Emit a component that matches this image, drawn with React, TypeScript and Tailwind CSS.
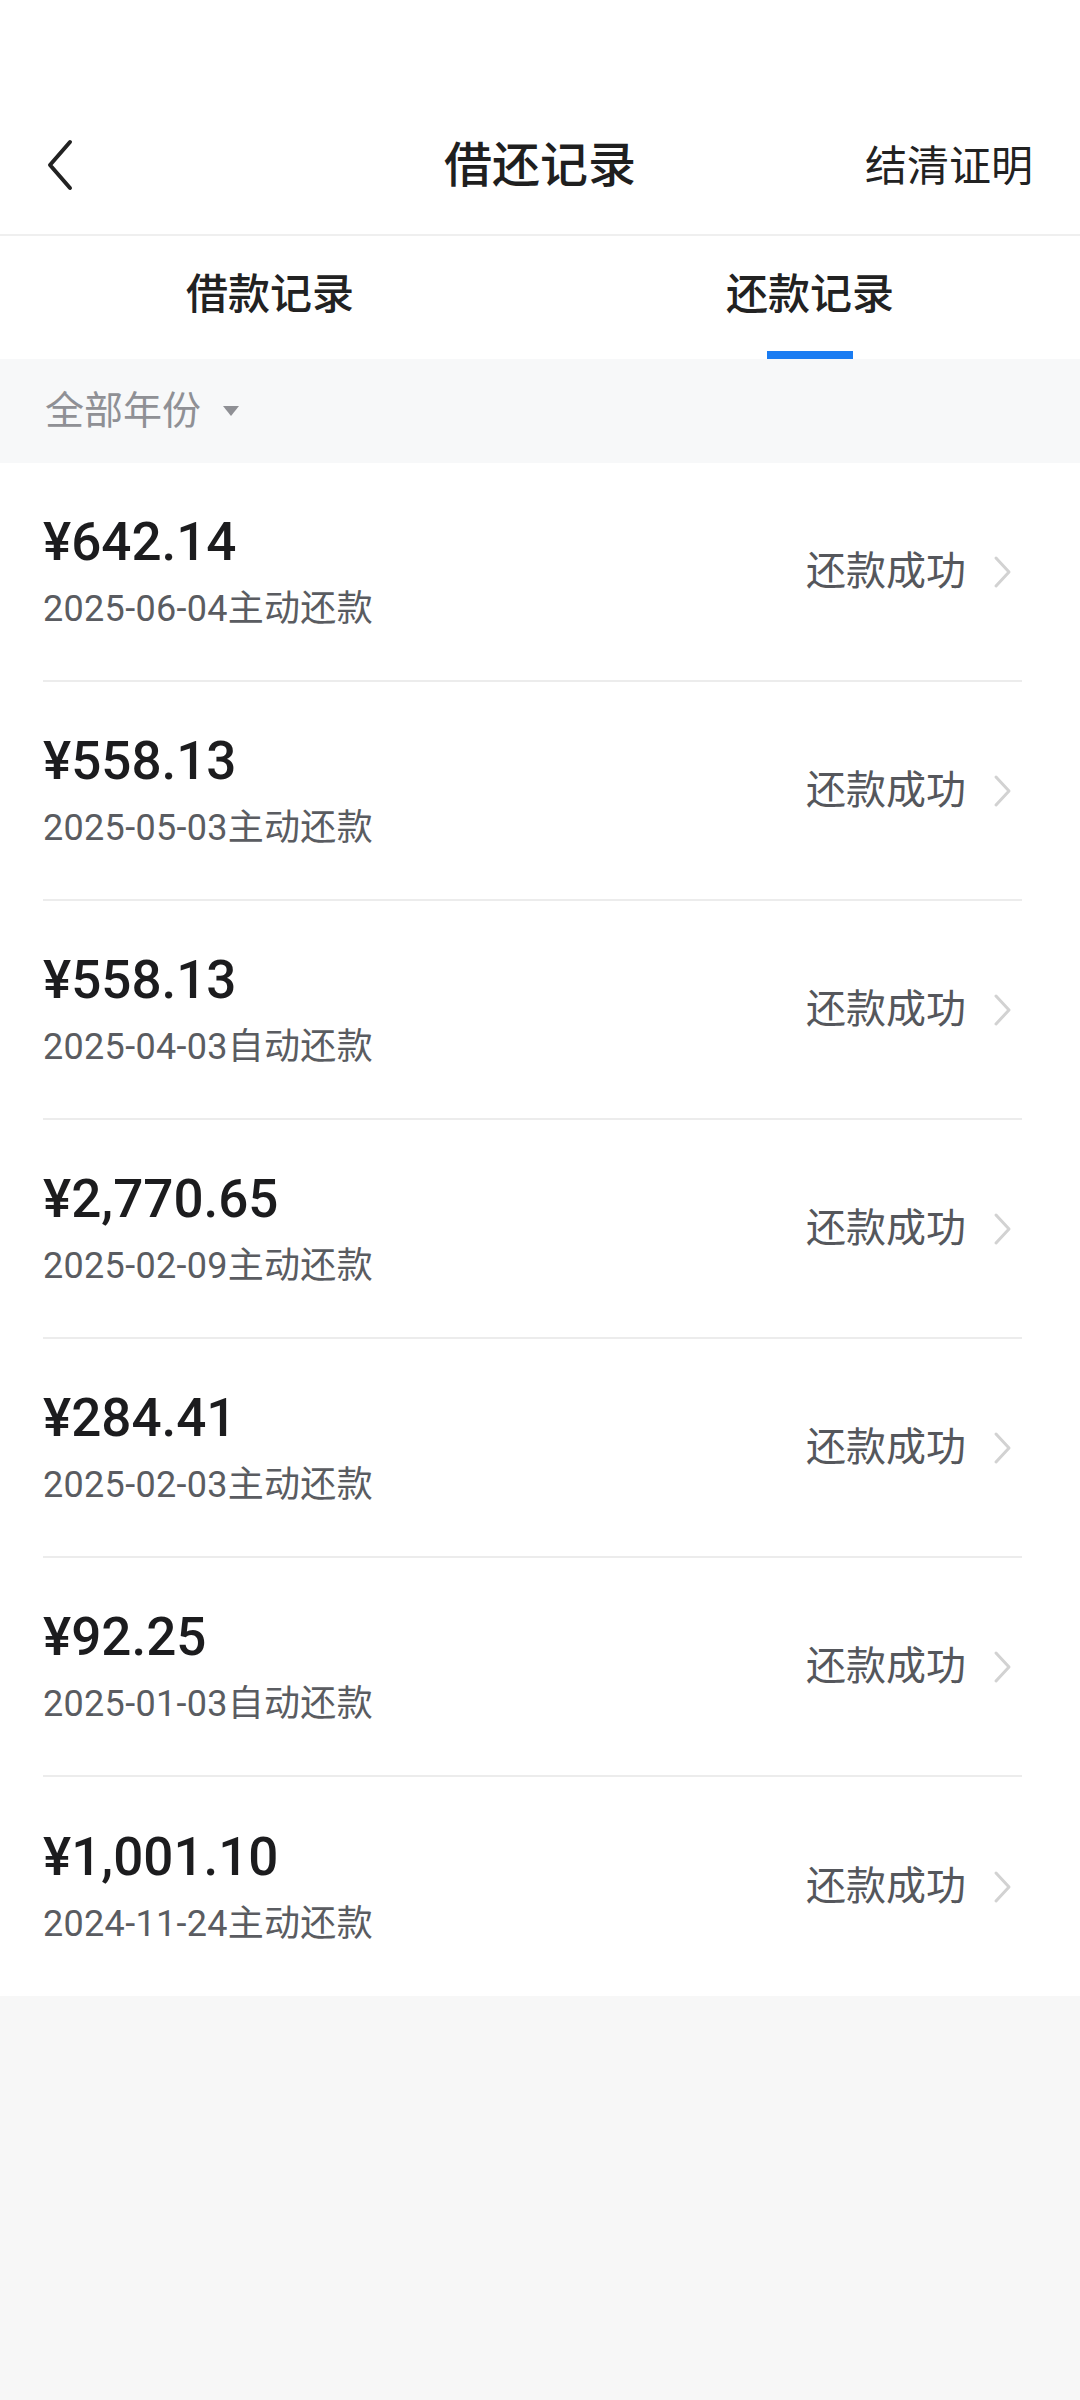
import React from 'react';

const records = [
  { amount: '¥642.14', date: '2025-06-04', type: '主动还款' },
  { amount: '¥558.13', date: '2025-05-03', type: '主动还款' },
  { amount: '¥558.13', date: '2025-04-03', type: '自动还款' },
  { amount: '¥2,770.65', date: '2025-02-09', type: '主动还款' },
  { amount: '¥284.41', date: '2025-02-03', type: '主动还款' },
  { amount: '¥92.25', date: '2025-01-03', type: '自动还款' },
  { amount: '¥1,001.10', date: '2024-11-24', type: '主动还款' },
];

const BackIcon: React.FC = () => (
  <svg width="30" height="54" viewBox="0 0 30 54" fill="none">
    <path d="M25 4 L5 27 L25 50" stroke="#222" strokeWidth="4" strokeLinecap="round" strokeLinejoin="round" />
  </svg>
);

const RowArrow: React.FC = () => (
  <svg width="20" height="34" viewBox="0 0 20 34" fill="none">
    <path d="M3 3 L16 17 L3 31" stroke="#d2d2d2" strokeWidth="3" strokeLinecap="round" strokeLinejoin="round" />
  </svg>
);

const App: React.FC = () => {
  return (
    <div className="min-h-[2400px] w-[1080px] bg-[#f7f7f7] font-['Roboto','Noto_Sans_CJK_SC',sans-serif]">
      {/* Header */}
      <div className="bg-white pt-[98px]">
        <div className="relative flex h-[136px] items-center justify-center">
          <div className="absolute left-[45px] top-[40px]">
            <BackIcon />
          </div>
          <h1 className="text-[48px] leading-none font-medium text-[#1f1f1f]">借还记录</h1>
          <span className="absolute right-[47px] top-[48px] text-[42px] leading-none text-[#222]">结清证明</span>
        </div>
        <div className="h-[2px] bg-[#efefef]" />
      </div>

      {/* Tabs */}
      <div className="flex h-[123px] bg-white">
        <div className="relative flex flex-1 justify-center">
          <span className="mt-[38px] text-[42px] leading-[42px] font-medium text-[#222]">借款记录</span>
        </div>
        <div className="relative flex flex-1 justify-center">
          <span className="mt-[38px] text-[42px] leading-[42px] font-medium text-[#222]">还款记录</span>
          <div className="absolute bottom-0 left-1/2 h-[8px] w-[86px] -translate-x-1/2 bg-[#1a7cf2]" />
        </div>
      </div>

      {/* Year filter */}
      <div className="flex h-[104px] items-center bg-[#f7f8f9] pl-[45px]">
        <span className="text-[39px] leading-none text-[#8f9095]">全部年份</span>
        <svg className="ml-[21px]" width="18" height="12" viewBox="0 0 18 12">
          <path d="M1 1 H17 L9 11 Z" fill="#8f9095" />
        </svg>
      </div>

      {/* Records */}
      <div className="bg-white">
        {records.map((r, i) => (
          <div
            key={i}
            className={
              i < records.length - 1
                ? 'ml-[43px] mr-[58px] flex h-[219px] items-center justify-between border-b-2 border-[#ececec]'
                : 'ml-[43px] mr-[58px] flex h-[219px] items-center justify-between'
            }
          >
            <div className="flex flex-col gap-[15px]">
              <span className="text-[53px] leading-[60px] font-medium text-[#1c1c1e]">{r.amount}</span>
              <span className="text-[36px] leading-[44px] tracking-[0.3px] text-[#5a5c61]">
                {r.date}
                {r.type}
              </span>
            </div>
            <div className="flex items-center gap-[27px] pr-[9px]">
              <span className="text-[40px] leading-none text-[#55575c]">还款成功</span>
              <RowArrow />
            </div>
          </div>
        ))}
      </div>
    </div>
  );
};

export default App;
